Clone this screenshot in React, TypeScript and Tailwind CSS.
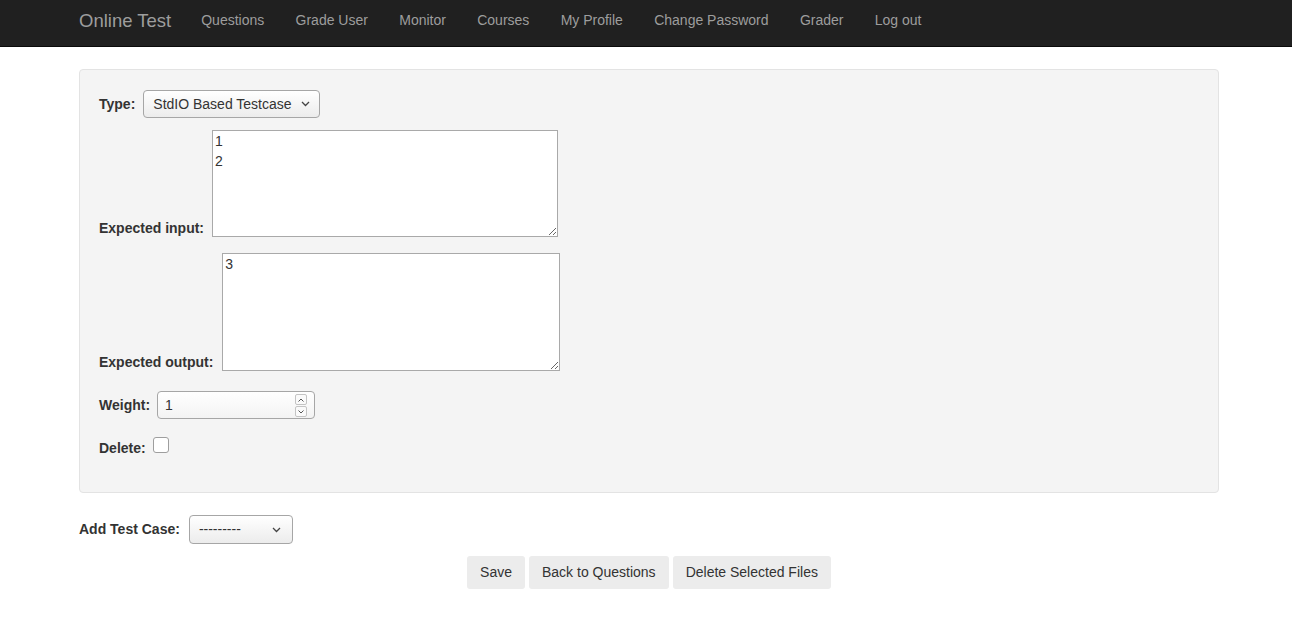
import React from 'react';

const navLinks = ['Questions', 'Grade User', 'Monitor', 'Courses', 'My Profile', 'Change Password', 'Grader', 'Log out'];

const Chevron = () => (
  <svg className="w-[9px] h-[6px]" viewBox="0 0 9 6" fill="none">
    <path d="M1 1l3.5 3.5L8 1" stroke="#444" strokeWidth="1.3" />
  </svg>
);

const FakeSelect: React.FC<{ label: string; className?: string }> = ({ label, className }) => (
  <div
    className={`flex items-center justify-between rounded-[4px] border border-[#a6a6a6] bg-gradient-to-b from-white to-[#ececec] pl-[9px] text-[14px] text-[#333] ${className ?? ''}`}
  >
    <span>{label}</span>
    <Chevron />
  </div>
);

export default function App() {
  return (
    <div className="min-h-[634px] bg-white font-['Liberation_Sans',Arial,sans-serif] text-[14px] text-[#333]">
      {/* navbar */}
      <div className="h-[47px] bg-[#202020] border-b border-[#0a0a0a]">
        <div className="ml-[79px] w-[1140px] h-full flex items-center">
          <span className="text-[18.5px] text-[#9d9d9d] mr-[30px] -mt-[5px]">Online Test</span>
          <div className="flex items-center gap-[31.3px] -mt-[5px]">
            {navLinks.map((l) => (
              <a key={l} className="text-[14px] text-[#9d9d9d]">
                {l}
              </a>
            ))}
          </div>
        </div>
      </div>

      <div className="ml-[79px] w-[1140px]">
        {/* well */}
        <div className="mt-[22px] rounded-[4px] border border-[#e3e3e3] bg-[#f4f4f4] pl-[19px] pt-[20px] pb-[34px]">
          <div className="flex items-center">
            <span className="font-bold mr-[8px]">Type:</span>
            <FakeSelect label="StdIO Based Testcase" className="w-[177px] h-[28px] pr-[9px]" />
          </div>

          <div className="flex items-end mt-[12px]">
            <span className="font-bold leading-[18px] mr-[8px]">Expected input:</span>
            <textarea
              className="w-[346px] h-[107px] border border-[#a9a9a9] bg-white px-[2px] py-0 text-[14px] leading-[20px] text-[#333]"
              defaultValue={'1\n2'}
            />
          </div>

          <div className="flex items-end mt-[16px]">
            <span className="font-bold leading-[18px] mr-[9px]">Expected output:</span>
            <textarea
              className="w-[338px] h-[118px] border border-[#a9a9a9] bg-white px-[2px] py-0 text-[14px] leading-[20px] text-[#333]"
              defaultValue="3"
            />
          </div>

          <div className="flex items-center mt-[20px]">
            <span className="font-bold mr-[7px]">Weight:</span>
            <div className="relative w-[158px] h-[28px] rounded-[4px] border border-[#a6a6a6] bg-gradient-to-b from-white to-[#f3f3f3] flex items-center pl-[7px]">
              <span>1</span>
              <div className="absolute right-[7px] top-[2px] flex flex-col gap-[1px]">
                <div className="w-[12px] h-[11px] rounded-[2px] border border-[#c4c4c4] bg-[#fafafa] flex items-center justify-center">
                  <svg className="w-[6px] h-[4px]" viewBox="0 0 6 4" fill="none">
                    <path d="M0.5 3.5L3 1l2.5 2.5" stroke="#555" strokeWidth="1" />
                  </svg>
                </div>
                <div className="w-[12px] h-[11px] rounded-[2px] border border-[#c4c4c4] bg-[#fafafa] flex items-center justify-center">
                  <svg className="w-[6px] h-[4px]" viewBox="0 0 6 4" fill="none">
                    <path d="M0.5 0.5L3 3l2.5-2.5" stroke="#555" strokeWidth="1" />
                  </svg>
                </div>
              </div>
            </div>
          </div>

          <div className="flex items-start mt-[18px]">
            <span className="font-bold leading-[20px] pt-[1px] mr-[7px]">Delete:</span>
            <div className="w-[16px] h-[16px] rounded-[3px] border border-[#9e9e9e] bg-white" />
          </div>
        </div>

        {/* add test case */}
        <div className="flex items-center mt-[22px]">
          <span className="font-bold mr-[9px]">Add Test Case:</span>
          <FakeSelect label="---------" className="w-[104px] h-[29px] pr-[11px]" />
        </div>

        <div className="flex justify-center gap-[4px] mt-[12px]">
          {['Save', 'Back to Questions', 'Delete Selected Files'].map((b) => (
            <button key={b} className="h-[33px] px-[13px] rounded-[3px] bg-[#ececec] text-[14px] text-[#333]">
              {b}
            </button>
          ))}
        </div>
      </div>
    </div>
  );
}
